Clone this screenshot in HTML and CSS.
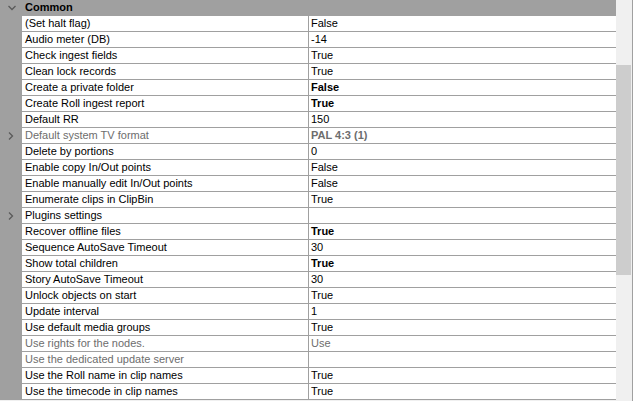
FILE: index.html
```html
<!DOCTYPE html>
<html>
<head>
<meta charset="utf-8">
<link rel="stylesheet" href="styles.css">
</head>
<body>
<div class="pg">
  <div class="grid">
    <div class="cat">
      <div class="gut"><svg class="chev" width="10" height="8" viewBox="0 0 10 8"><polyline points="1.5,2 5,5.5 8.5,2" fill="none" stroke="#5a5a5a" stroke-width="1.3"/></svg></div>
      <div class="catname">Common</div>
    </div>
    <div class="row"><div class="gut"></div><div class="name">(Set halt flag)</div><div class="val">False</div></div>
    <div class="row"><div class="gut"></div><div class="name">Audio meter (DB)</div><div class="val">-14</div></div>
    <div class="row"><div class="gut"></div><div class="name">Check ingest fields</div><div class="val">True</div></div>
    <div class="row"><div class="gut"></div><div class="name">Clean lock records</div><div class="val">True</div></div>
    <div class="row"><div class="gut"></div><div class="name">Create a private folder</div><div class="val b">False</div></div>
    <div class="row"><div class="gut"></div><div class="name">Create Roll ingest report</div><div class="val b">True</div></div>
    <div class="row"><div class="gut"></div><div class="name">Default RR</div><div class="val">150</div></div>
    <div class="row dis"><div class="gut"><svg class="chev" width="8" height="10" viewBox="0 0 8 10"><polyline points="2,1.5 5.5,5 2,8.5" fill="none" stroke="#5a5a5a" stroke-width="1.3"/></svg></div><div class="name">Default system TV format</div><div class="val b">PAL 4:3 (1)</div></div>
    <div class="row"><div class="gut"></div><div class="name">Delete by portions</div><div class="val">0</div></div>
    <div class="row"><div class="gut"></div><div class="name">Enable copy In/Out points</div><div class="val">False</div></div>
    <div class="row"><div class="gut"></div><div class="name">Enable manually edit In/Out points</div><div class="val">False</div></div>
    <div class="row"><div class="gut"></div><div class="name">Enumerate clips in ClipBin</div><div class="val">True</div></div>
    <div class="row"><div class="gut"><svg class="chev" width="8" height="10" viewBox="0 0 8 10"><polyline points="2,1.5 5.5,5 2,8.5" fill="none" stroke="#5a5a5a" stroke-width="1.3"/></svg></div><div class="name">Plugins settings</div><div class="val"></div></div>
    <div class="row"><div class="gut"></div><div class="name">Recover offline files</div><div class="val b">True</div></div>
    <div class="row"><div class="gut"></div><div class="name">Sequence AutoSave Timeout</div><div class="val">30</div></div>
    <div class="row"><div class="gut"></div><div class="name">Show total children</div><div class="val b">True</div></div>
    <div class="row"><div class="gut"></div><div class="name">Story AutoSave Timeout</div><div class="val">30</div></div>
    <div class="row"><div class="gut"></div><div class="name">Unlock objects on start</div><div class="val">True</div></div>
    <div class="row"><div class="gut"></div><div class="name">Update interval</div><div class="val">1</div></div>
    <div class="row"><div class="gut"></div><div class="name">Use default media groups</div><div class="val">True</div></div>
    <div class="row dis"><div class="gut"></div><div class="name">Use rights for the nodes.</div><div class="val">Use</div></div>
    <div class="row dis"><div class="gut"></div><div class="name">Use the dedicated update server</div><div class="val"></div></div>
    <div class="row"><div class="gut"></div><div class="name">Use the Roll name in clip names</div><div class="val">True</div></div>
    <div class="row"><div class="gut"></div><div class="name">Use the timecode in clip names</div><div class="val">True</div></div>
  </div>
  <div class="sb"><div class="thumb"></div></div>
</div>
</body>
</html>
```
FILE: styles.css
```css
html, body {
  margin: 0;
  padding: 0;
  background: #f0f0f0;
}
body {
  font-family: "Liberation Sans", Arial, sans-serif;
  font-size: 11px;
  color: #000;
  width: 633px;
  height: 401px;
  overflow: hidden;
}
.pg {
  display: flex;
  width: 633px;
  height: 401px;
}
.grid {
  width: 616px;
  display: flex;
  flex-direction: column;
}
.cat {
  display: flex;
  height: 16px;
  background: #a0a0a0;
}
.cat .gut {
  width: 22px;
  display: flex;
  align-items: center;
  justify-content: center;
  padding-left: 1px;
  box-sizing: border-box;
}
.catname {
  font-weight: bold;
  line-height: 15px;
  padding-left: 3px;
}
.row {
  display: flex;
  height: 16px;
}
.gut {
  width: 22px;
  flex: none;
  background: #a0a0a0;
  display: flex;
  align-items: center;
  justify-content: center;
  height: 16px;
}
.chev {
  display: block;
}
.name {
  width: 286px;
  flex: none;
  box-sizing: border-box;
  height: 16px;
  line-height: 15px;
  padding-left: 3px;
  background: #fff;
  border-bottom: 1px solid #a0a0a0;
  border-right: 1px solid #a0a0a0;
  width: 287px;
  white-space: nowrap;
}
.val {
  width: 307px;
  flex: none;
  box-sizing: border-box;
  height: 16px;
  line-height: 15px;
  padding-left: 2px;
  background: #fff;
  border-bottom: 1px solid #a0a0a0;
  white-space: nowrap;
}
.b {
  font-weight: bold;
}
.dis .name, .dis .val {
  color: #6d6d6d;
}
.sb {
  width: 17px;
  flex: none;
  height: 401px;
  background: #f0f0f0;
  border-right: 1px solid #a0a0a0;
  box-sizing: border-box;
  padding-top: 65px;
}
.thumb {
  width: 15px;
  height: 210px;
  background: #cdcdcd;
}
```
